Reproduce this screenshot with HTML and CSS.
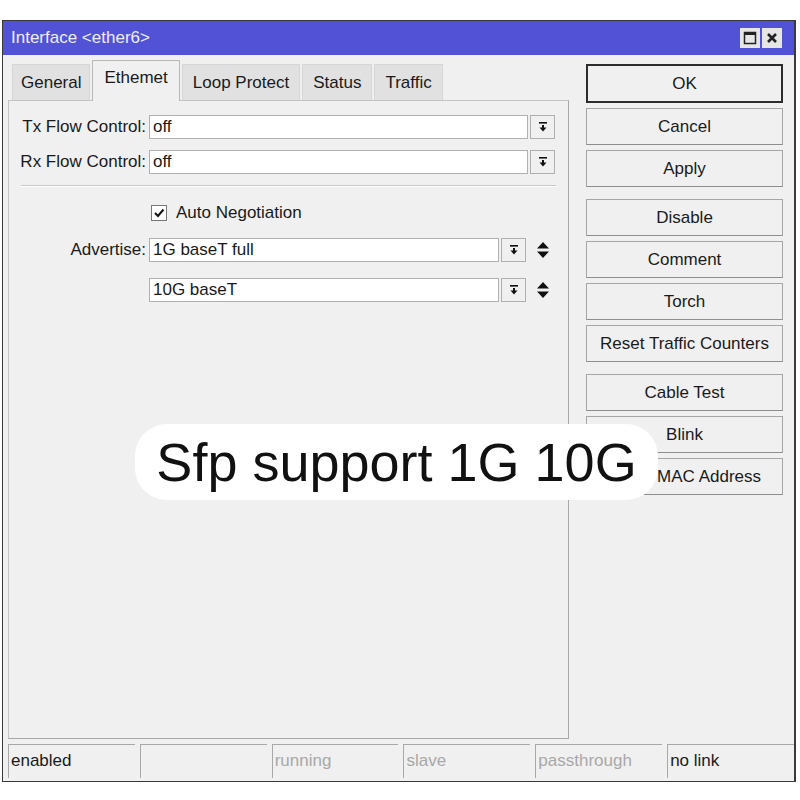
FILE: index.html
```html
<!DOCTYPE html>
<html lang="en">
<head>
    <meta charset="UTF-8">
    <title>Interface &lt;ether6&gt;</title>
    <link rel="stylesheet" href="styles.css">
</head>
<body>
    <div class="window">
        <div class="titlebar">
            <span class="title">Interface &lt;ether6&gt;</span>
            <div class="win-buttons">
                <span class="win-btn">
                    <svg width="14" height="14" viewBox="0 0 14 14"><rect x="1.5" y="1.5" width="11" height="11" fill="none" stroke="#222" stroke-width="1.5"/><rect x="1.5" y="1.5" width="11" height="2.5" fill="#222"/></svg>
                </span>
                <span class="win-btn">
                    <svg width="14" height="14" viewBox="0 0 14 14"><path d="M3 3 L11 11 M11 3 L3 11" stroke="#222" stroke-width="2.6"/></svg>
                </span>
            </div>
        </div>

        <div class="main">
            <div class="left">
                <div class="tabs">
                    <div class="tab">General</div>
                    <div class="tab active">Ethemet</div>
                    <div class="tab">Loop Protect</div>
                    <div class="tab">Status</div>
                    <div class="tab">Traffic</div>
                </div>
                <div class="pane">
                    <div class="row">
                        <label>Tx Flow Control:</label>
                        <div class="field">
                            <div class="input">off</div>
                            <span class="drop"><svg width="12" height="12" viewBox="0 0 12 12"><rect x="2" y="1" width="8" height="1.6" fill="#111"/><path d="M5 4 H7 V6.5 H9.5 L6 10.5 L2.5 6.5 H5 Z" fill="#111"/></svg></span>
                        </div>
                    </div>
                    <div class="row">
                        <label>Rx Flow Control:</label>
                        <div class="field">
                            <div class="input">off</div>
                            <span class="drop"><svg width="12" height="12" viewBox="0 0 12 12"><rect x="2" y="1" width="8" height="1.6" fill="#111"/><path d="M5 4 H7 V6.5 H9.5 L6 10.5 L2.5 6.5 H5 Z" fill="#111"/></svg></span>
                        </div>
                    </div>

                    <div class="separator"></div>

                    <div class="row check-row">
                        <label></label>
                        <div class="check">
                            <span class="box"><svg width="12" height="12" viewBox="0 0 12 12"><path d="M2 6 L5 9 L10.5 2.5" fill="none" stroke="#111" stroke-width="2"/></svg></span>
                            Auto Negotiation
                        </div>
                    </div>

                    <div class="row adv">
                        <label>Advertise:</label>
                        <div class="field">
                            <div class="input">1G baseT full</div>
                            <span class="drop"><svg width="12" height="12" viewBox="0 0 12 12"><rect x="2" y="1" width="8" height="1.6" fill="#111"/><path d="M5 4 H7 V6.5 H9.5 L6 10.5 L2.5 6.5 H5 Z" fill="#111"/></svg></span>
                            <span class="updown"><svg width="14" height="18" viewBox="0 0 14 18"><path d="M7 1 L13 7.5 H1 Z M1 10.5 H13 L7 17 Z" fill="#111"/></svg></span>
                        </div>
                    </div>
                    <div class="row adv">
                        <label></label>
                        <div class="field">
                            <div class="input">10G baseT</div>
                            <span class="drop"><svg width="12" height="12" viewBox="0 0 12 12"><rect x="2" y="1" width="8" height="1.6" fill="#111"/><path d="M5 4 H7 V6.5 H9.5 L6 10.5 L2.5 6.5 H5 Z" fill="#111"/></svg></span>
                            <span class="updown"><svg width="14" height="18" viewBox="0 0 14 18"><path d="M7 1 L13 7.5 H1 Z M1 10.5 H13 L7 17 Z" fill="#111"/></svg></span>
                        </div>
                    </div>
                </div>
            </div>

            <div class="actions">
                <div class="group">
                    <div class="btn default">OK</div>
                    <div class="btn">Cancel</div>
                    <div class="btn">Apply</div>
                </div>
                <div class="group">
                    <div class="btn">Disable</div>
                    <div class="btn">Comment</div>
                    <div class="btn">Torch</div>
                    <div class="btn">Reset Traffic Counters</div>
                </div>
                <div class="group">
                    <div class="btn">Cable Test</div>
                    <div class="btn">Blink</div>
                    <div class="btn">Reset MAC Address</div>
                </div>
            </div>
        </div>

        <div class="statusbar">
            <div class="cell">enabled</div>
            <div class="cell"></div>
            <div class="cell dim">running</div>
            <div class="cell dim">slave</div>
            <div class="cell dim">passthrough</div>
            <div class="cell">no link</div>
        </div>
    </div>

    <div class="caption">Sfp support 1G 10G</div>
</body>
</html>
```

FILE: styles.css
```css
body {
    margin: 0;
    padding: 0;
    background-color: #fff;
    font-family: "Liberation Sans", Arial, sans-serif;
    color: #1a1a1a;
    position: relative;
}

.window {
    margin: 20px 0 0 2px;
    width: 794px;
    height: 762px;
    border: 1px solid #3a3a3a;
    border-right-width: 2px;
    background-color: #f0f0f0;
    box-sizing: border-box;
    display: flex;
    flex-direction: column;
}

.titlebar {
    height: 34px;
    background-color: #5252d6;
    display: flex;
    align-items: center;
    justify-content: space-between;
    padding: 0 12px 0 8px;
    flex-shrink: 0;
}

.title {
    color: #eeeeff;
    font-size: 17px;
}

.win-buttons {
    display: flex;
    gap: 2px;
}

.win-btn {
    width: 20px;
    height: 20px;
    background-color: #e6e6e6;
    display: flex;
    align-items: center;
    justify-content: center;
}

.main {
    flex: 1;
    display: flex;
    padding: 5px 0 0 5px;
    min-height: 0;
}

.left {
    width: 561px;
    display: flex;
    flex-direction: column;
}

.tabs {
    display: flex;
    align-items: flex-end;
    height: 40px;
    padding-left: 4px;
    gap: 2px;
}

.tab {
    height: 36px;
    line-height: 36px;
    padding: 0 10px;
    font-size: 17px;
    background-color: #e1e1e1;
    border: 1px solid #d6d6d6;
    border-bottom: none;
    box-sizing: border-box;
}

.tab:first-child {
    padding: 0 8px;
}

.tab.active {
    height: 41px;
    line-height: 34px;
    padding: 0 11px;
    background-color: #f0f0f0;
    border-color: #b9b9b9;
    margin-bottom: -1px;
    position: relative;
    z-index: 1;
}

.pane {
    flex: 1;
    border: 1px solid #c4c4c4;
    border-right-color: #a8a8a8;
    border-bottom-color: #a8a8a8;
    padding-top: 14px;
}

.row {
    display: grid;
    grid-template-columns: 137px 1fr;
    column-gap: 3px;
    align-items: center;
    margin-bottom: 11px;
    padding-right: 13px;
}

.row label {
    text-align: right;
    font-size: 17px;
}

.field {
    display: flex;
    align-items: center;
    gap: 2px;
}

.input {
    flex: 1;
    height: 22px;
    line-height: 22px;
    background-color: #fff;
    border: 1px solid #b0b0b0;
    padding-left: 3px;
    font-size: 17px;
}

.drop {
    width: 23px;
    height: 22px;
    border: 1px solid #b0b0b0;
    background-color: #f0f0f0;
    display: flex;
    align-items: center;
    justify-content: center;
}

.updown {
    width: 30px;
    display: flex;
    justify-content: center;
}

.separator {
    height: 1px;
    background-color: #c8c8c8;
    border-bottom: 1px solid #fff;
    margin: 2px 12px 16px 12px;
}

.check-row {
    margin-bottom: 15px;
}

.check {
    display: flex;
    align-items: center;
    gap: 9px;
    font-size: 17px;
    padding-left: 2px;
}

.box {
    width: 14px;
    height: 14px;
    background-color: #fff;
    border: 1px solid #777;
    display: flex;
    align-items: center;
    justify-content: center;
}

.adv {
    margin-bottom: 16px;
    padding-right: 10px;
}

.actions {
    margin-left: 17px;
    margin-top: 6px;
    width: 197px;
    display: flex;
    flex-direction: column;
    gap: 12px;
}

.group {
    display: flex;
    flex-direction: column;
    gap: 5px;
}

.btn {
    height: 37px;
    line-height: 35px;
    text-align: center;
    font-size: 17px;
    border: 1px solid #a6a6a6;
    border-bottom-color: #8e8e8e;
    background-color: #f0f0f0;
    box-sizing: border-box;
}

.btn.default {
    border: 2px solid #2c2c2c;
    height: 39px;
    margin-top: -2px;
}

.statusbar {
    display: flex;
    gap: 5px;
    padding: 5px 0 3px 5px;
    height: 34px;
    flex-shrink: 0;
}

.cell {
    flex: 1;
    border-top: 1px solid #a8a8a8;
    border-left: 1px solid #a8a8a8;
    font-size: 17px;
    line-height: 32px;
    padding-left: 2px;
}

.cell.dim {
    color: #a8a8a8;
}

.caption {
    position: absolute;
    left: 135px;
    top: 424px;
    width: 523px;
    height: 76px;
    border-radius: 32px;
    background-color: #fff;
    font-family: "Liberation Sans", Arial, sans-serif;
    font-size: 54px;
    line-height: 76px;
    text-align: center;
    color: #111;
}
```
